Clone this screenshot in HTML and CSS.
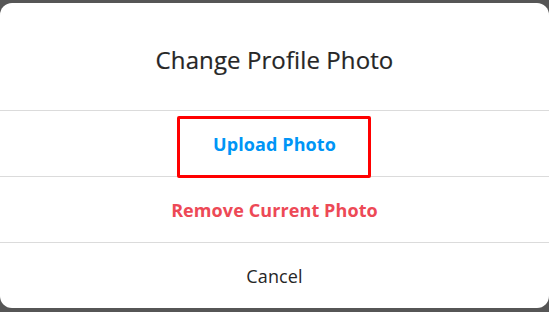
FILE: index.html
```html
<!DOCTYPE html>
<html>
<head>
<meta charset="utf-8">
<link rel="stylesheet" href="styles.css">
</head>
<body>
<div class="modal">
  <div class="header"><h3 class="title">Change Profile Photo</h3></div>
  <div class="row row-upload">
    <button class="action upload">Upload Photo</button>
    <span class="highlight"></span>
  </div>
  <div class="row"><button class="action remove">Remove Current Photo</button></div>
  <div class="row last"><button class="action cancel">Cancel</button></div>
</div>
</body>
</html>
```
FILE: styles.css
```css
html, body {
  margin: 0;
  padding: 0;
  background: #565656;
  height: 100%;
  overflow: hidden;
}
body {
  font-family: "Open Sans", "Noto Sans", sans-serif;
  padding-top: 3px;
}
.modal {
  background: #fff;
  border-radius: 12px;
  height: 305px;
  display: flex;
  flex-direction: column;
}
.header {
  height: 107px;
  flex: none;
  border-bottom: 1px solid #dbdbdb;
  display: flex;
  align-items: center;
  justify-content: center;
}
.title {
  margin: 0;
  font-size: 24px;
  font-weight: 400;
  color: #262626;
  padding-top: 6px;
  letter-spacing: 0.1px;
  -webkit-text-stroke: 0.2px #262626;
}
.row {
  height: 65px;
  flex: none;
  border-bottom: 1px solid #dbdbdb;
  display: flex;
  align-items: center;
  justify-content: center;
  position: relative;
}
.row.last {
  border-bottom: none;
  height: 66px;
}
.action {
  background: none;
  border: none;
  font-family: inherit;
  font-size: 18px;
  letter-spacing: 0.1px;
  padding: 0;
  cursor: pointer;
}
.upload { color: #0095f6; font-weight: 700; }
.remove { color: #ed4956; font-weight: 700; }
.cancel { color: #262626; font-weight: 400; }
.highlight {
  position: absolute;
  left: 177px;
  top: 5px;
  width: 194px;
  height: 62px;
  box-sizing: border-box;
  border: 3px solid #ff0000;
  border-radius: 2px;
}
```
